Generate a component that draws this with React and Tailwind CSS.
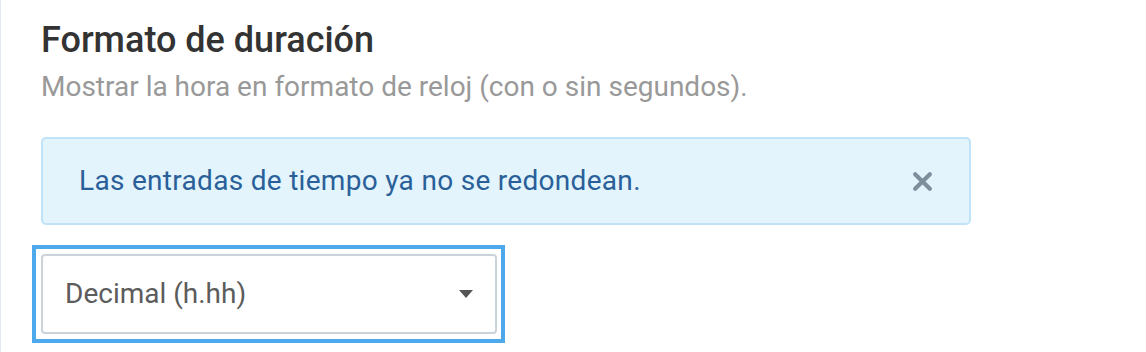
export default function App() {
  return (
    <div className="w-[1146px] h-[352px] bg-white border-l border-[#e3e9f0] overflow-hidden" style={{ fontFamily: 'Roboto, "Noto Sans", sans-serif' }}>
      <div className="pl-[40px] pt-[18px]">
        <h1 className="text-[36px] leading-[44px] font-medium text-[#333333]">Formato de duración</h1>
        <p className="mt-[6px] text-[28px] leading-[38px] text-[#999999]">Mostrar la hora en formato de reloj (con o sin segundos).</p>
        <div className="mt-[31px] w-[930px] h-[88px] rounded-[5px] border-2 border-[#bfe4f7] bg-[#e3f4fc] flex items-center justify-between pl-[36px] pr-[36px]">
          <span className="text-[28px] tracking-[0.3px] text-[#2a6099]">Las entradas de tiempo ya no se redondean.</span>
          <svg width="21" height="21" viewBox="0 0 20 20" className="text-[#7d8e9c]">
            <path d="M3 3 L17 17 M17 3 L3 17" stroke="currentColor" strokeWidth="4" strokeLinecap="round" />
          </svg>
        </div>
        <div className="mt-[20px] ml-[-9px] w-[473px] border-4 border-[#4ea8ec] p-[5px] pr-[4px]">
          <div className="h-[80px] rounded-[4px] border-2 border-[#cbd3da] flex items-center justify-between pl-[22px] pr-[22px]">
            <span className="text-[28px] text-[#5c5c5c]">Decimal (h.hh)</span>
            <svg width="14" height="8" viewBox="0 0 14 8" className="text-[#555555]">
              <path d="M0 0 L14 0 L7 8 Z" fill="currentColor" />
            </svg>
          </div>
        </div>
      </div>
    </div>
  );
}
